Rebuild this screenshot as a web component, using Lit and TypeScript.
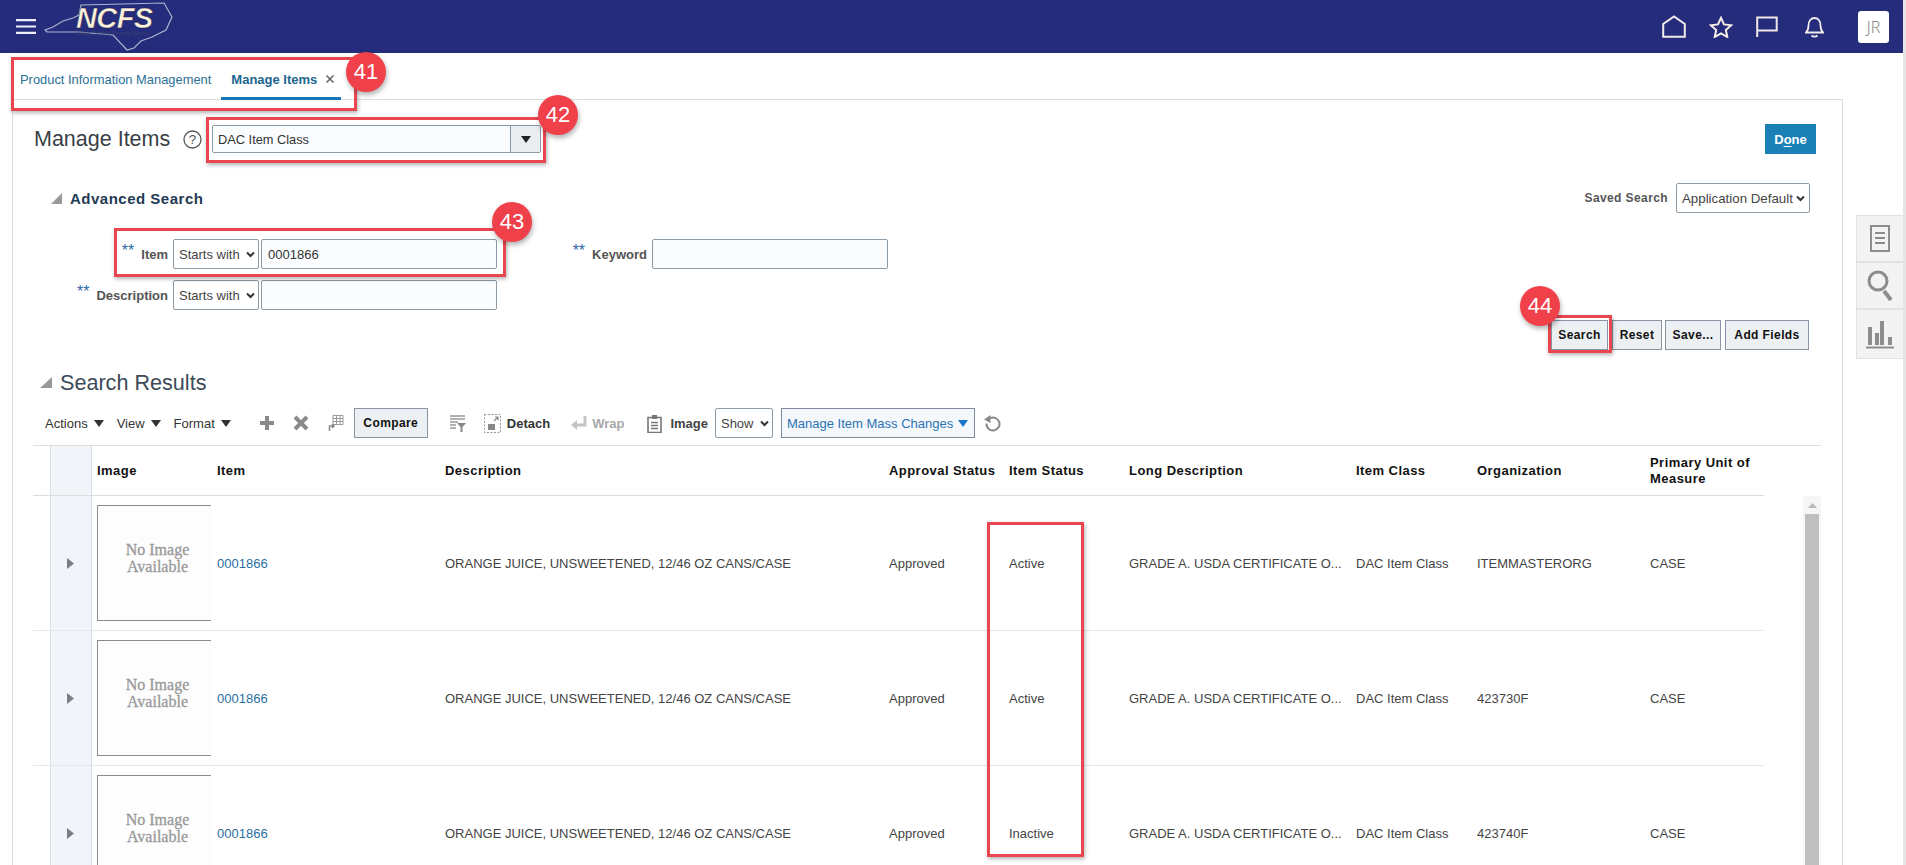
import { LitElement, html, css, svg } from "lit";
import { customElement } from "lit/decorators.js";

const caret = svg`<svg class="chev" width="9" height="7" viewBox="0 0 9 7"><path d="M1 1.5l3.5 3.5L8 1.5" fill="none" stroke="#333" stroke-width="2"/></svg>`;
const tri = (c = "#333") => html`<svg class="tri" width="10" height="7" viewBox="0 0 10 7"><path d="M0 0h10L5 7z" fill=${c}/></svg>`;

const rows = [
  { org: "ITEMMASTERORG", status: "Active" },
  { org: "423730F", status: "Active" },
  { org: "423740F", status: "Inactive" },
];

const heads = ["Image", "Item", "Description", "Approval Status", "Item Status", "Long Description", "Item Class", "Organization", "Primary Unit of Measure"];

@customElement("app-root")
export class AppRoot extends LitElement {
  static styles = css`
    :host { display: block; position: relative; width: 1906px; height: 865px; overflow: hidden; background: #fff; font-family: "Liberation Sans", Arial, sans-serif; font-size: 13px; color: #333; }
    .page { width: 1903px; height: 865px; border-right: 3px solid #e6e6e6; overflow: hidden; }
    .top { height: 53px; background: #252c7b; display: flex; align-items: center; }
    .menu { margin-left: 16px; width: 20px; height: 15px; display: block; }
    .logo { margin-left: 9px; width: 128px; height: 48px; display: block; overflow: visible; }
    .logo-main { font: italic bold 29px "Liberation Sans", sans-serif; fill: #fdf2dc; stroke: #1a1d50; stroke-width: 0.5px; letter-spacing: -0.6px; }
    .logo-sub { font: 5px "Liberation Sans", sans-serif; fill: #3c4270; }
    .top-icons { margin-left: auto; display: flex; align-items: center; }
    .home { margin-right: 23px; }
    .star { margin-right: 23px; }
    .flag { margin-right: 27px; }
    .bell { margin-right: 34px; }
    .avatar { width: 31px; height: 32px; background: #fff; border-radius: 3px; margin-right: 14px; display: flex; align-items: center; justify-content: center; color: #777; font: 300 16px "Open Sans", sans-serif; }
    .main { display: flex; align-items: flex-start; }
    .left { width: 1843px; flex: none; }
    .tabs { height: 46px; display: flex; align-items: center; padding: 7px 0 0 20px; box-sizing: border-box; }
    .tab { font-size: 12.9px; color: #2b7195; }
    .tab.active { margin-left: 10px; padding: 7px 6px 0 10px; height: 46px; box-sizing: border-box; border-bottom: 3px solid #1b75b9; display: flex; align-items: center; color: #22668f; font-weight: bold; font-size: 13px; position: relative; top: -2.5px; }
    .x { margin-left: 8px; width: 10px; height: 10px; }
    .panel { margin-left: 12px; border: 1px solid #dcdcdc; border-bottom: 0; height: 766px; box-sizing: border-box; }
    .title-row { display: flex; align-items: center; padding: 24px 26px 0 21px; height: 30px; box-sizing: content-box; }
    h1 { margin: 0; font-weight: normal; font-size: 21.5px; color: #3a3f45; width: 136px; white-space: nowrap; }
    .help { margin-left: 13px; }
    .combo { margin-left: 10px; width: 329px; height: 28px; box-sizing: border-box; border: 1px solid #8c9aa5; border-radius: 2px; display: flex; align-items: center; background: #fafcfd; padding-left: 5px; font-size: 12.8px; }
    .combo .drop { margin-left: auto; width: 29px; height: 100%; border-left: 1px solid #8c9aa5; background: #e9edf0; display: flex; align-items: center; justify-content: center; }
    .done { margin-left: auto; width: 51px; height: 30px; background: #1a80b6; color: #fff; font-weight: bold; font-size: 13px; display: flex; align-items: center; justify-content: center; }
    .done u { text-underline-offset: 2px; }
    .adv-row { display: flex; align-items: center; height: 30px; margin-top: 29px; padding: 0 32px 0 38px; }
    .adv-tri { width: 11px; height: 11px; }
    h2 { margin: 0 0 0 8px; font-size: 15px; color: #1f3a55; letter-spacing: 0.5px; white-space: nowrap; }
    .saved { margin-left: auto; font-weight: bold; font-size: 12px; color: #555; letter-spacing: 0.4px; }
    .sel { height: 30px; box-sizing: border-box; border: 1px solid #8c9aa5; border-radius: 2px; display: flex; align-items: center; justify-content: space-between; padding: 0 5px 0 5px; background: #fff; font-size: 13px; white-space: nowrap; color: #444; }
    .saved-sel { width: 134px; margin-left: 8px; font-size: 13.3px; padding-left: 5px; padding-right: 4px; }
    .form { display: grid; grid-template-columns: 155px 91px 238px 150px 241px; width: max-content; row-gap: 11px; margin-top: 26px; align-items: center; }
    .lab { display: flex; justify-content: flex-end; align-items: center; font-weight: bold; font-size: 13px; color: #555; white-space: nowrap; }
    .lab i { font-style: normal; font-weight: normal; color: #2f6aa5; font-size: 16px; margin-right: 7px; position: relative; top: -3px; }
    .sel.cond { margin-left: 5px; width: 86px; padding-right: 3px; }
    .inp { height: 30px; box-sizing: border-box; border: 1px solid #8c9aa5; border-radius: 2px; background: #fafcfd; display: flex; align-items: center; padding-left: 6px; font-size: 13px; color: #333; }
    .form .i1 { margin-left: 2px; width: 236px; }
    .form .i2 { margin-left: 5px; width: 236px; }
    .btns { display: flex; justify-content: flex-end; gap: 4px; margin-top: 10px; padding-right: 33px; }
    .btn { height: 30px; box-sizing: border-box; border: 1px solid #8795a5; background: #ecf0f3; display: flex; align-items: center; justify-content: center; font-weight: bold; font-size: 12px; color: #111; letter-spacing: 0.4px; white-space: nowrap; }
    .btn.rs { margin-right: -1px; }
    .res-title { display: flex; align-items: center; margin-top: 20px; height: 24px; padding-left: 27px; }
    .res-title svg { width: 12px; height: 11px; margin-right: 8px; }
    .res-title span { font-size: 21.6px; color: #3c4a58; white-space: nowrap; position: relative; top: 1px; }
    .bar { display: flex; align-items: center; height: 30px; margin-top: 14px; padding-left: 32px; font-size: 13px; white-space: nowrap; }
    .bar .m { color: #333; margin-right: 6px; }
    .bar .tri { margin-right: 13px; }
    .ic { display: block; flex: none; }
    .bold { font-weight: bold; color: #333; }
    .cmp { width: 74px; margin-left: 10px; }
    .mass { width: 194px; height: 30px; box-sizing: border-box; border: 1px solid #7f8ba0; margin-left: 8px; background: #f5f8fb; color: #2a73b5; display: flex; align-items: center; padding-left: 5px; font-size: 13px; }
    .mass .tri { margin: 0 6px 0 auto; }
    .grid { margin-left: 20px; margin-top: 7px; width: 1788px; border-top: 1px solid #dedede; display: grid; grid-template-columns: 1731px 57px; }
    .r { display: grid; grid-template-columns: 17px 42px 120px 228px 444px 120px 120px 227px 121px 173px 119px; border-bottom: 1px solid #e4e8ec; box-sizing: border-box; }
    .r.h { height: 50px; grid-column: 1; border-bottom-color: #dcdcdc; }
    .r.d { height: 135px; }
    .c { padding-left: 5px; display: flex; align-items: center; font-size: 13px; color: #444; white-space: nowrap; min-width: 0; }
    .d .c { padding-top: 1px; box-sizing: border-box; }
    .h .c { font-weight: bold; color: #111; white-space: normal; line-height: 16px; letter-spacing: 0.45px; font-size: 13px; }
    .gut { background: #f1f4f8; border-left: 1px solid #dbe1e8; border-right: 1px solid #dbe1e8; box-sizing: border-box; display: flex; align-items: center; justify-content: center; }
    .gut svg { margin-right: 2px; }
    .c.blank { padding: 0; }
    .d .c.gut { padding-left: 0; }
    .h .c.gut { padding-left: 0; }
    .d .c.img-cell { padding: 9px 0 0 5px; align-items: flex-start; }
    .noimg { width: 114px; height: 116px; box-sizing: border-box; border: 1px solid #8b8b8b; border-right: 0; background: #fdfdfd; display: flex; align-items: center; justify-content: center; text-align: center; padding: 0 0 10px 6px; font: 16px/17.5px "Liberation Serif", serif; color: #999; -webkit-text-stroke: 0.3px #999; white-space: normal; }
    .d .link { color: #2a6f9f; }
    .rows { grid-column: 1; }
    .sb { grid-column: 2; grid-row: 2; justify-self: end; width: 18px; background: #f6f6f6; display: flex; flex-direction: column; align-items: center; height: 400px; }
    .sb svg { margin-top: 7px; margin-bottom: 6px; flex: none; }
    .thumb { width: 14px; flex: 1; background: #bfbfbf; }
    .side { margin-left: 13px; margin-top: 162px; width: 47px; background: #f3f3f3; border: 1px solid #e2e2e2; border-right: 0; box-sizing: border-box; display: flex; flex-direction: column; }
    .side div { height: 47px; display: flex; align-items: center; justify-content: center; border-bottom: 2px solid #e2e2e2; box-sizing: border-box; }
    .side div:last-child { border-bottom: 0; height: 48px; }
    .hl { position: absolute; border: 3px solid #ea4650; box-sizing: border-box; box-shadow: 1px 2px 4px rgba(0,0,0,.3); pointer-events: none; }
    .badge { position: absolute; width: 40px; height: 40px; border-radius: 50%; background: #f0404a; color: #fff; font-size: 22px; display: flex; align-items: center; justify-content: center; box-shadow: 1px 3px 5px rgba(0,0,0,.3); }
  `;

  private hl(l: number, t: number, w: number, h: number) {
    return html`<div class="hl" style="left:${l}px;top:${t}px;width:${w}px;height:${h}px"></div>`;
  }
  private badge(n: string, cx: number, cy: number) {
    return html`<div class="badge" style="left:${cx - 20}px;top:${cy - 20}px">${n}</div>`;
  }

  render() {
    return html`
      <div class="page">
        <div class="top">
          <svg class="menu" viewBox="0 0 20 15"><path d="M0 1.2h20M0 7.5h20M0 13.8h20" stroke="#eef" stroke-width="2.2"/></svg>
          <svg class="logo" viewBox="0 0 128 48">
            <path d="M0 27L8 24L18 18L28 15L34 12L36 2L119 0L127 14L121 27L107 34L96 38L89 45L82 47L68 32L34 29L2 29Z" fill="none" stroke="#aeb3cf" stroke-width="1.2"/>
            <text class="logo-main" x="31" y="25">NCFS</text>
            <text class="logo-sub" x="33" y="32">North Carolina Financial System</text>
          </svg>
          <div class="top-icons">
            <svg class="home ic" width="24" height="23" viewBox="0 0 24 23"><path d="M1.2 21.8V9L12 1.5 22.8 9v12.8z" fill="none" stroke="#f0ecec" stroke-width="2"/></svg>
            <svg class="star ic" width="24" height="22" viewBox="0 0 24 22"><path d="M12 1.8l3 6.6 7.2.8-5.4 4.8 1.5 7-6.3-3.6-6.3 3.6 1.5-7L1.8 9.2 9 8.4z" fill="none" stroke="#f5efe8" stroke-width="2"/></svg>
            <svg class="flag ic" width="22" height="21" viewBox="0 0 22 21"><path d="M1.200 21V1.500h19.500v13H1.200" fill="none" stroke="#efe8ea" stroke-width="2"/></svg>
            <svg class="bell ic" width="19" height="22" viewBox="0 0 19 22"><path d="M1 16.500c2-2 2.500-3 2.500-7C3.500 5 6 2 9.500 2s6 3 6 7.500c0 4 .5 5 2.500 7zM6.500 19.500c1.500 1.500 4.500 1.500 6 0" fill="none" stroke="#f2ecec" stroke-width="1.800"/></svg>
            <div class="avatar">JR</div>
          </div>
        </div>
        <div class="main">
          <div class="left">
            <div class="tabs">
              <span class="tab">Product Information Management</span>
              <span class="tab active">Manage Items
                <svg class="x" viewBox="0 0 10 10"><path d="M1.500 1.500l7 7M8.500 1.500l-7 7" stroke="#666" stroke-width="1.600"/></svg>
              </span>
            </div>
            <div class="panel">
              <div class="title-row">
                <h1>Manage Items</h1>
                <svg class="help ic" width="19" height="19" viewBox="0 0 19 19"><circle cx="9.500" cy="9.500" r="8.500" fill="none" stroke="#555" stroke-width="1.300"/><text x="9.500" y="14" text-anchor="middle" font-size="13.500" fill="#555" font-family="Liberation Sans">?</text></svg>
                <div class="combo">DAC Item Class<span class="drop">${tri("#222")}</span></div>
                <div class="done"><span>D<u>o</u>ne</span></div>
              </div>
              <div class="adv-row">
                <svg class="adv-tri ic" viewBox="0 0 11 11"><path d="M11 0v11H0z" fill="#999"/></svg>
                <h2>Advanced Search</h2>
                <span class="saved">Saved Search</span>
                <div class="sel saved-sel">Application Default ${caret}</div>
              </div>
              <div class="form">
                <div class="lab"><i>**</i>Item</div>
                <div class="sel cond">Starts with ${caret}</div>
                <div class="inp i1">0001866</div>
                <div class="lab"><i>**</i>Keyword</div>
                <div class="inp i2"></div>
                <div class="lab"><i>**</i>Description</div>
                <div class="sel cond">Starts with ${caret}</div>
                <div class="inp i1"></div>
              </div>
              <div class="btns">
                <div class="btn" style="width:57px">Search</div>
                <div class="btn rs" style="width:50px">Reset</div>
                <div class="btn" style="width:56px">Save...</div>
                <div class="btn" style="width:84px">Add Fields</div>
              </div>
              <div class="res-title">
                <svg viewBox="0 0 12 11"><path d="M12 0v11H0z" fill="#999"/></svg>
                <span>Search Results</span>
              </div>
              <div class="bar">
                <span class="m">Actions</span>${tri()}
                <span class="m">View</span>${tri()}
                <span class="m">Format</span>${tri()}
                <svg class="ic" width="16" height="16" viewBox="0 0 16 16" style="margin-left:15px"><path d="M8 1v14M1 8h14" stroke="#8a8a8a" stroke-width="4"/></svg>
                <svg class="ic" width="16" height="16" viewBox="0 0 16 16" style="margin-left:18px"><path d="M2 2l12 12M14 2L2 14" stroke="#8a8a8a" stroke-width="4"/></svg>
                <svg class="ic" width="17" height="18" viewBox="0 0 17 18" style="margin-left:18px"><path d="M6 1.500h10v9H6zM6 4.500h10M9.500 1.500v9M13 1.500v9M6 7.500h10" fill="none" stroke="#999" stroke-width="1"/><path d="M2.500 17v-5h4M5 10l2 2-2 2" fill="none" stroke="#888" stroke-width="1.500"/></svg>
                <div class="btn cmp">Compare</div>
                <svg class="ic" width="17" height="17" viewBox="0 0 17 17" style="margin-left:21px"><path d="M1 1h15M1 4h15M1 7h8M1 10h6M1 13h6" stroke="#999" stroke-width="1.500"/><path d="M8 8h9l-3.500 4v5h-2v-5z" fill="#888"/></svg>
                <svg class="ic" width="17" height="19" viewBox="0 0 17 19" style="margin-left:18px"><rect x=".5" y=".5" width="16" height="18" fill="none" stroke="#999" stroke-dasharray="2 1.500"/><path d="M4 10h7v6H4z" fill="#888"/><path d="M10 7l4-4M11 3h3v3" fill="none" stroke="#888" stroke-width="1.200"/></svg>
                <span class="bold" style="margin-left:6px">Detach</span>
                <svg class="ic" width="16" height="16" viewBox="0 0 16 16" style="margin-left:21px"><path d="M14 1v9H5" fill="none" stroke="#c4c4c4" stroke-width="3"/><path d="M6 5v10L0 10z" fill="#c4c4c4"/></svg>
                <span class="bold" style="margin-left:5px;color:#a8a8a8">Wrap</span>
                <svg class="ic" width="15" height="19" viewBox="0 0 15 19" style="margin-left:23px"><path d="M1 3.500h13v15H1z" fill="none" stroke="#777" stroke-width="1.600"/><path d="M5 1h5v4H5z" fill="#777"/><path d="M4 8.500h7M4 11.500h7M4 14.500h7" stroke="#777" stroke-width="1.300"/></svg>
                <span class="bold" style="margin-left:8px;color:#444">Image</span>
                <div class="sel" style="width:58px;margin-left:7px;padding-right:3px">Show ${caret}</div>
                <div class="mass">Manage Item Mass Changes ${tri("#1b75c9")}</div>
                <svg class="ic" width="17" height="17" viewBox="0 0 17 17" style="margin-left:9px"><path d="M5.500 3.500a6.500 6.500 0 1 1-3 5" fill="none" stroke="#888" stroke-width="2"/><path d="M0 4.500L6.500 0v8z" fill="#888"/></svg>
              </div>
              <div class="grid">
                <div class="r h">
                  <div class="c blank"></div>
                  <div class="c gut"></div>
                  ${heads.map((h) => html`<div class="c">${h}</div>`)}
                </div>
                <div class="rows">
                  ${rows.map(
                    (r) => html`<div class="r d">
                      <div class="c blank"></div>
                      <div class="c gut"><svg width="7" height="11" viewBox="0 0 7 11"><path d="M0 0l7 5.500L0 11z" fill="#7b7f85"/></svg></div>
                      <div class="c img-cell"><div class="noimg">No Image Available</div></div>
                      <div class="c link">0001866</div>
                      <div class="c">ORANGE JUICE, UNSWEETENED, 12/46 OZ CANS/CASE</div>
                      <div class="c">Approved</div>
                      <div class="c">${r.status}</div>
                      <div class="c">GRADE A. USDA CERTIFICATE O...</div>
                      <div class="c">DAC Item Class</div>
                      <div class="c">${r.org}</div>
                      <div class="c">CASE</div>
                    </div>`
                  )}
                </div>
                <div class="sb">
                  <svg width="9" height="5" viewBox="0 0 9 5"><path d="M0 5l4.500-5L9 5z" fill="#b8b8b8"/></svg>
                  <div class="thumb"></div>
                </div>
              </div>
            </div>
          </div>
          <div class="side">
            <div><svg width="20" height="27" viewBox="0 0 20 27"><path d="M1 1h18v25H1z" fill="none" stroke="#8d8d8d" stroke-width="2"/><path d="M5 8h10M5 13h10M5 18h10" stroke="#8d8d8d" stroke-width="2"/></svg></div>
            <div><svg width="26" height="32" viewBox="0 0 26 32"><circle cx="11" cy="11" r="9" fill="none" stroke="#8d8d8d" stroke-width="3"/><path d="M17 21l7 9" stroke="#8d8d8d" stroke-width="4"/></svg></div>
            <div><svg width="28" height="30" viewBox="0 0 28 30"><path d="M4 8v18M11 14v12M16 2v24M24 18v8" stroke="#8d8d8d" stroke-width="4"/><path d="M0 28.500h28" stroke="#8d8d8d" stroke-width="2"/></svg></div>
          </div>
        </div>
      </div>
      ${this.hl(11, 57, 346, 54)}
      ${this.hl(206, 117, 340, 46)}
      ${this.hl(114, 228, 392, 49)}
      ${this.hl(1548, 315, 64, 38)}
      ${this.hl(987, 522, 97, 335)}
      ${this.badge("41", 366, 72)}
      ${this.badge("42", 558, 115)}
      ${this.badge("43", 512, 222)}
      ${this.badge("44", 1540, 306)}
    `;
  }
}
